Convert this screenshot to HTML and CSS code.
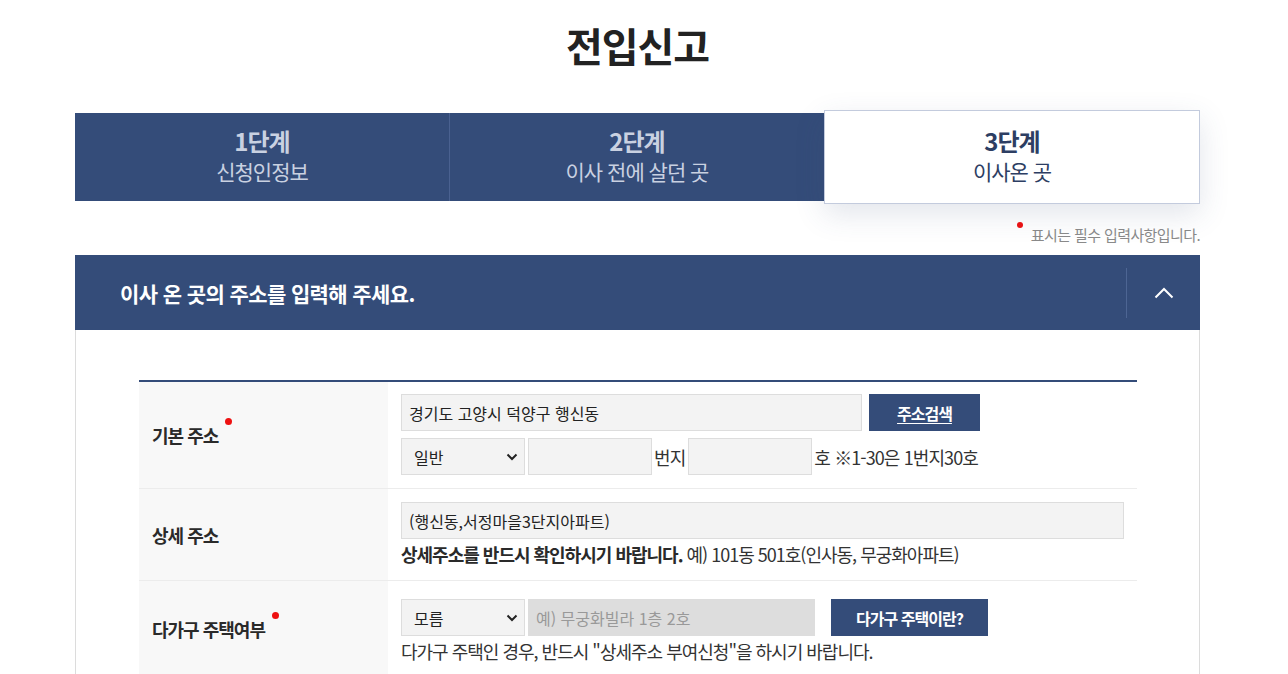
FILE: index.html
```html
<!DOCTYPE html>
<html lang="ko">
<head>
<meta charset="utf-8">
<title>전입신고</title>
<link rel="stylesheet" href="styles.css">
</head>
<body>
<div class="wrap">
	<h1 class="title">전입신고</h1>

	<div class="steps">
		<div class="step">
			<strong>1단계</strong>
			<span>신청인정보</span>
		</div>
		<div class="step">
			<strong>2단계</strong>
			<span>이사 전에 살던 곳</span>
		</div>
		<div class="step on">
			<strong>3단계</strong>
			<span>이사온 곳</span>
		</div>
	</div>

	<p class="req-note"><i class="dot"></i>표시는 필수 입력사항입니다.</p>

	<div class="panel">
		<div class="panel-head">
			<h2>이사 온 곳의 주소를 입력해 주세요.</h2>
			<button class="toggle" type="button">
				<svg width="20" height="12" viewBox="0 0 20 12"><path d="M1.5 10.5 L10 2 L18.5 10.5" fill="none" stroke="#fff" stroke-width="2"/></svg>
			</button>
		</div>
		<div class="panel-body">
			<table class="form-table">
				<tr>
					<th><span class="req">기본 주소</span></th>
					<td class="row1">
						<div class="line">
							<input class="inp w-addr" type="text" value="경기도 고양시 덕양구 행신동" readonly>
							<button class="btn btn-search" type="button">주소검색</button>
						</div>
						<div class="line">
							<div class="sel"><span>일반</span><svg width="12" height="8" viewBox="0 0 12 8"><path d="M1.5 1.5 L6 6 L10.5 1.5" fill="none" stroke="#222" stroke-width="2"/></svg></div>
							<input class="inp w-num" type="text">
							<span class="txt">번지</span>
							<input class="inp w-num" type="text">
							<span class="txt">호 ※1-30은 1번지30호</span>
						</div>
					</td>
				</tr>
				<tr>
					<th>상세 주소</th>
					<td class="row2">
						<input class="inp w-full" type="text" value="(행신동,서정마을3단지아파트)" readonly>
						<p class="help"><b>상세주소를 반드시 확인하시기 바랍니다.</b> 예) 101동 501호(인사동, 무궁화아파트)</p>
					</td>
				</tr>
				<tr>
					<th><span class="req">다가구 주택여부</span></th>
					<td class="row3">
						<div class="line">
							<div class="sel"><span>모름</span><svg width="12" height="8" viewBox="0 0 12 8"><path d="M1.5 1.5 L6 6 L10.5 1.5" fill="none" stroke="#222" stroke-width="2"/></svg></div>
							<input class="inp w-dis" type="text" placeholder="예) 무궁화빌라 1층 2호" disabled>
							<button class="btn btn-info" type="button">다가구 주택이란?</button>
						</div>
						<p class="help">다가구 주택인 경우, 반드시 "상세주소 부여신청"을 하시기 바랍니다.</p>
					</td>
				</tr>
			</table>
		</div>
	</div>
</div>
</body>
</html>
```

FILE: styles.css
```css
body{
	margin: 0;
	background: #ffffff;
	color: #222222;
	font-family: "Noto Sans CJK KR", "Noto Sans", sans-serif;
}
.wrap{
	width: 1125px;
	margin: 0 0 0 75px;
}
.title{
	margin: 0;
	padding-top: 17px;
	height: 93px;
	font-size: 40px;
	line-height: 56px;
	font-weight: 700;
	text-align: center;
	letter-spacing: -1px;
	color: #222222;
}
.steps{
	display: flex;
	align-items: center;
	height: 94px;
}
.step{
	flex: 1;
	height: 88px;
	background: #344c79;
	color: #c9d1e1;
	display: flex;
	flex-direction: column;
	align-items: center;
	justify-content: center;
	border-left: 1px solid #4a6190;
	letter-spacing: -1px;
}
.step:first-child{
	border-left: 0;
}
.step strong{
	font-size: 24px;
	line-height: 30px;
	font-weight: 700;
	margin-top: -3px;
}
.step span{
	font-size: 21px;
	line-height: 30px;
}
.step.on{
	height: 92px;
	background: #ffffff;
	color: #2d3e63;
	border: 1px solid #c3cbdd;
	box-shadow: 0 10px 28px rgba(60, 80, 120, 0.15);
	position: relative;
	z-index: 1;
}
.req-note{
	margin: 20px 0 0;
	height: 31px;
	text-align: right;
	font-size: 15px;
	line-height: 22px;
	color: #8a8a8a;
	letter-spacing: -0.6px;
}
.req-note .dot{
	display: inline-block;
	width: 6px;
	height: 6px;
	border-radius: 50%;
	background: #ee1111;
	vertical-align: top;
	margin-right: 8px;
	margin-top: -2px;
}
.panel{
	border: 1px solid #dcdcdc;
	border-top: 0;
}
.panel-head{
	background: #344c79;
	height: 75px;
	display: flex;
	align-items: center;
	margin: 0 -1px;
}
.panel-head h2{
	flex: 1;
	margin: 0 0 0 45px;
	color: #ffffff;
	font-size: 21px;
	font-weight: 700;
	letter-spacing: -0.6px;
}
.toggle{
	width: 74px;
	height: 50px;
	background: none;
	border: 0;
	border-left: 1px solid #4d6593;
	display: flex;
	align-items: center;
	justify-content: center;
	padding: 0;
}
.panel-body{
	padding: 50px 62px 0 63px;
}
.form-table{
	width: 100%;
	border-collapse: collapse;
	border-top: 2px solid #344c79;
}
.form-table tr{
	border-bottom: 1px solid #ececec;
}
.form-table th{
	width: 249px;
	background: #f8f8f8;
	text-align: left;
	padding: 0 0 0 13px;
	font-size: 18px;
	font-weight: 700;
	color: #2a2a2a;
	letter-spacing: -1px;
	box-sizing: border-box;
}
.req{
	position: relative;
}
.req::after{
	content: "";
	position: absolute;
	right: -14px;
	top: -4px;
	width: 7px;
	height: 7px;
	border-radius: 50%;
	background: #ee1111;
}
.form-table td{
	padding: 12px 0 13px 13px;
	vertical-align: top;
}
.form-table td.row2{
	padding-top: 13px;
	padding-bottom: 14px;
}
.form-table td.row3{
	padding-top: 18px;
	padding-bottom: 14px;
}
.line{
	display: flex;
	align-items: center;
	height: 37px;
}
.line + .line{
	margin-top: 7px;
}
.inp{
	box-sizing: border-box;
	height: 37px;
	background: #f3f3f3;
	border: 1px solid #dddddd;
	padding: 0 7px;
	font-family: "Noto Sans CJK KR", sans-serif;
	font-size: 16px;
	color: #222222;
	outline: none;
}
.w-addr{ width: 461px; }
.w-num{ width: 124px; margin-left: 3px; }
.w-full{ width: 723px; height: 37px; display: block; }
.w-dis{
	width: 287px;
	margin-left: 3px;
	background: #dddddd;
	border-color: #dddddd;
}
.w-dis::placeholder{
	color: #999999;
}
.sel{
	box-sizing: border-box;
	width: 124px;
	height: 37px;
	background: #f3f3f3;
	border: 1px solid #dddddd;
	display: flex;
	align-items: center;
	justify-content: space-between;
	padding: 0 6px 0 12px;
	font-size: 16px;
}
.txt{
	font-size: 18px;
	letter-spacing: -0.9px;
	margin-left: 2px;
	color: #333333;
}
.btn{
	height: 37px;
	background: #344c79;
	color: #ffffff;
	border: 0;
	font-family: "Noto Sans CJK KR", sans-serif;
	font-weight: 700;
	letter-spacing: -1px;
	padding: 0;
}
.btn-search{
	width: 111px;
	margin-left: 7px;
	font-size: 16px;
	text-decoration: underline;
	text-underline-offset: 3px;
}
.btn-info{
	width: 157px;
	margin-left: 16px;
	font-size: 16px;
}
.help{
	margin: 3px 0 0;
	font-size: 18px;
	line-height: 24px;
	letter-spacing: -1px;
	color: #333333;
}
.help b{
	color: #2a2a2a;
}
```
